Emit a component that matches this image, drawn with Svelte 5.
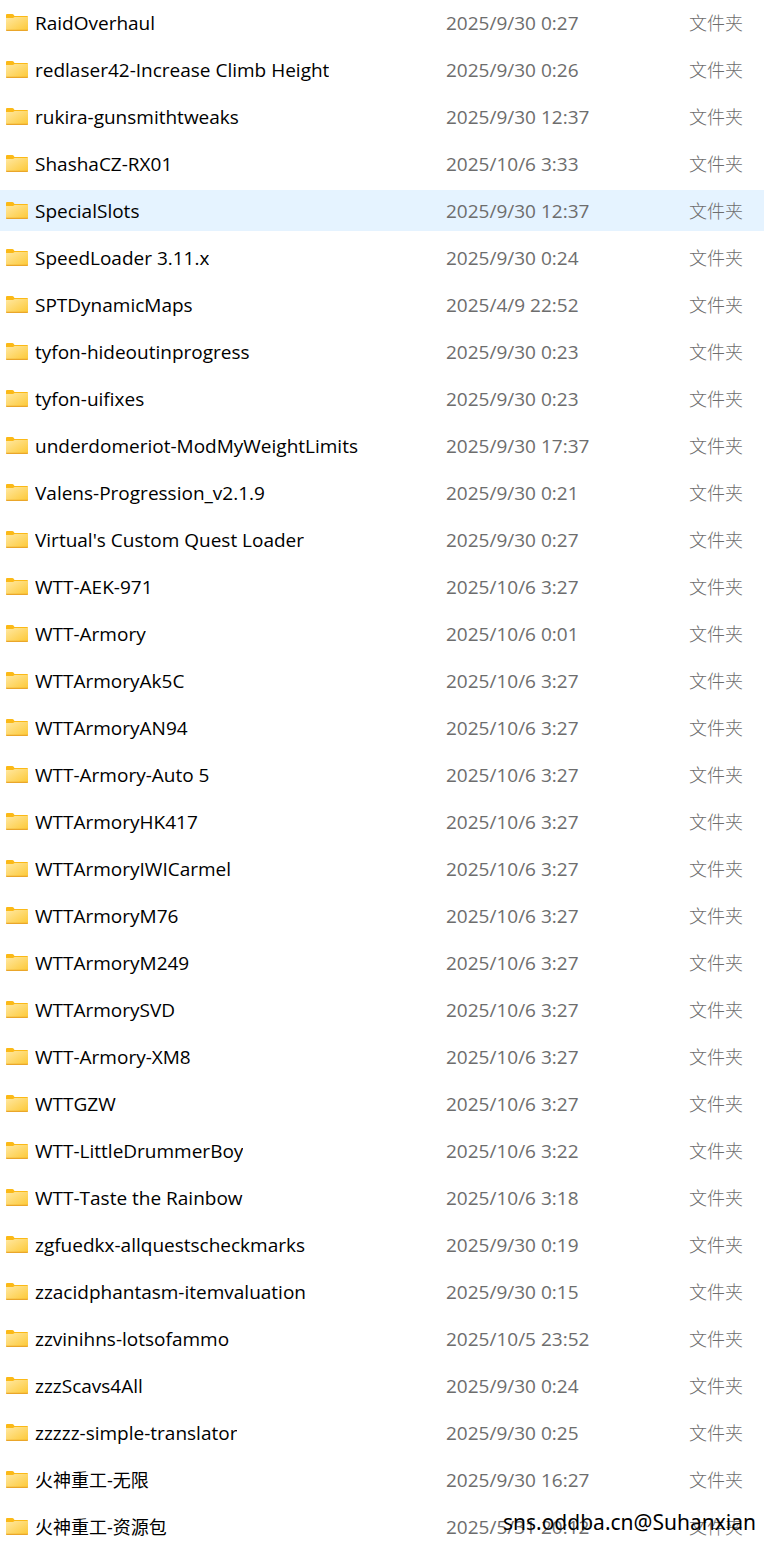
<script>
  const type = '文件夹';

  let selected = $state('SpecialSlots');

  const folders = [
    { name: 'RaidOverhaul', date: '2025/9/30 0:27' },
    { name: 'redlaser42-Increase Climb Height', date: '2025/9/30 0:26' },
    { name: 'rukira-gunsmithtweaks', date: '2025/9/30 12:37' },
    { name: 'ShashaCZ-RX01', date: '2025/10/6 3:33' },
    { name: 'SpecialSlots', date: '2025/9/30 12:37' },
    { name: 'SpeedLoader 3.11.x', date: '2025/9/30 0:24' },
    { name: 'SPTDynamicMaps', date: '2025/4/9 22:52' },
    { name: 'tyfon-hideoutinprogress', date: '2025/9/30 0:23' },
    { name: 'tyfon-uifixes', date: '2025/9/30 0:23' },
    { name: 'underdomeriot-ModMyWeightLimits', date: '2025/9/30 17:37' },
    { name: 'Valens-Progression_v2.1.9', date: '2025/9/30 0:21' },
    { name: "Virtual's Custom Quest Loader", date: '2025/9/30 0:27' },
    { name: 'WTT-AEK-971', date: '2025/10/6 3:27' },
    { name: 'WTT-Armory', date: '2025/10/6 0:01' },
    { name: 'WTTArmoryAk5C', date: '2025/10/6 3:27' },
    { name: 'WTTArmoryAN94', date: '2025/10/6 3:27' },
    { name: 'WTT-Armory-Auto 5', date: '2025/10/6 3:27' },
    { name: 'WTTArmoryHK417', date: '2025/10/6 3:27' },
    { name: 'WTTArmoryIWICarmel', date: '2025/10/6 3:27' },
    { name: 'WTTArmoryM76', date: '2025/10/6 3:27' },
    { name: 'WTTArmoryM249', date: '2025/10/6 3:27' },
    { name: 'WTTArmorySVD', date: '2025/10/6 3:27' },
    { name: 'WTT-Armory-XM8', date: '2025/10/6 3:27' },
    { name: 'WTTGZW', date: '2025/10/6 3:27' },
    { name: 'WTT-LittleDrummerBoy', date: '2025/10/6 3:22' },
    { name: 'WTT-Taste the Rainbow', date: '2025/10/6 3:18' },
    { name: 'zgfuedkx-allquestscheckmarks', date: '2025/9/30 0:19' },
    { name: 'zzacidphantasm-itemvaluation', date: '2025/9/30 0:15' },
    { name: 'zzvinihns-lotsofammo', date: '2025/10/5 23:52' },
    { name: 'zzzScavs4All', date: '2025/9/30 0:24' },
    { name: 'zzzzz-simple-translator', date: '2025/9/30 0:25' },
    { name: '火神重工-无限', date: '2025/9/30 16:27', cjk: true },
    { name: '火神重工-资源包', date: '2025/5/31 20:12', cjk: true }
  ];
</script>

<svg class="defs" width="0" height="0" aria-hidden="true">
  <defs>
    <linearGradient id="folder-front" x1="0" y1="0" x2="1" y2="1">
      <stop offset="0" stop-color="#ffe8a2" />
      <stop offset="1" stop-color="#fdc937" />
    </linearGradient>
  </defs>
</svg>

<main class="pane">
  <table class="list">
    <tbody>
      {#each folders as folder (folder.name)}
        <tr class:selected={folder.name === selected} onclick={() => (selected = folder.name)}>
          <td class="name-cell">
            <div class="entry">
              <svg class="icon" viewBox="0 0 22 17" aria-hidden="true">
                <path d="M0 1Q0 0 1 0H6.4Q7 0 7.5 .6L8.5 2H21Q22 2 22 3V8H0Z" fill="#fbb917" />
                <path d="M0 4H7L8.6 3H22V16.2H0Z" fill="url(#folder-front)" />
                <path d="M0 15.8H22V16.2Q22 17 21.2 17H.8Q0 17 0 16.2Z" fill="#eaa62a" />
              </svg>
              <span class="name" class:cjk={folder.cjk}>{folder.name}</span>
            </div>
          </td>
          <td class="date">{folder.date}</td>
          <td class="type">{type}</td>
        </tr>
      {/each}
    </tbody>
  </table>
  <span class="watermark">sns.oddba.cn@Suhanxian</span>
</main>

<style>
  :global(body) {
    margin: 0;
    background: #fff;
  }

  .defs {
    position: absolute;
  }

  .pane {
    position: relative;
    height: 100vh;
    overflow: hidden;
    font-family: 'Open Sans', 'Noto Sans CJK SC', sans-serif;
    font-size: 19px;
    line-height: 28px;
    color: #000;
  }

  .list {
    width: 100%;
    margin-top: -4px;
    table-layout: fixed;
    border-collapse: separate;
    border-spacing: 0 6px;
  }

  td {
    height: 41px;
    padding: 0;
    white-space: nowrap;
    vertical-align: middle;
  }

  .selected td {
    background: #e5f3ff;
  }

  .entry {
    display: flex;
    align-items: center;
    gap: 7px;
    padding-left: 6px;
  }

  .icon {
    width: 22px;
    height: 17px;
    flex: none;
  }

  .name {
    overflow: hidden;
    text-overflow: ellipsis;
  }

  .date {
    width: 243px;
    color: #6d6d6d;
  }

  .type {
    width: 75px;
    color: #6d6d6d;
    font-weight: 300;
  }

  .type,
  .cjk {
    font-size: 18px;
  }

  .watermark {
    position: absolute;
    right: 8px;
    bottom: 7px;
    font-family: 'Noto Sans', sans-serif;
    font-size: 21px;
  }
</style>
